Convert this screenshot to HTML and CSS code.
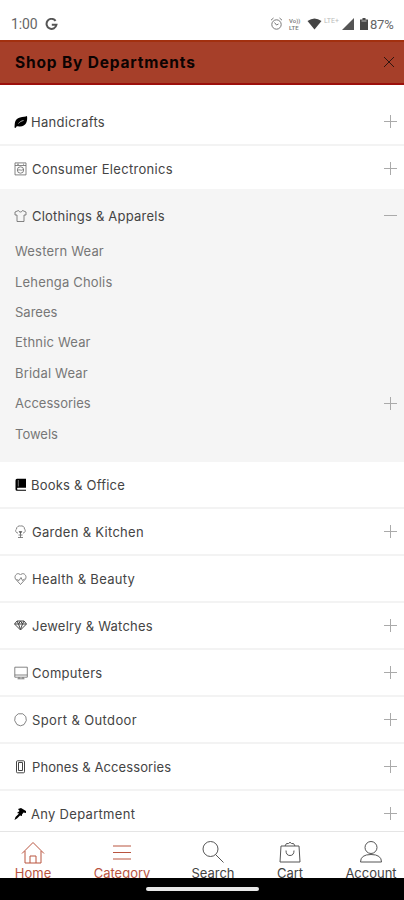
FILE: index.html
```
<!DOCTYPE html>
<html lang="en">
<head>
<meta charset="utf-8">
<title>Shop By Departments</title>
<link rel="stylesheet" href="styles.css">
</head>
<body>
<div class="phone">
  <div class="status">
    <span class="clock">1:00</span>
    <svg class="google" viewBox="0 0 13 13"><path d="M10.6 2.9A5 5 0 1 0 11.5 6.7H6.8" fill="none" stroke="#555" stroke-width="2"/></svg>
    <div class="status-right">
      <svg width="13" height="14" viewBox="0 0 13 14" fill="none" stroke="#777"><circle cx="6.5" cy="7.5" r="4.7"/><path d="M1 3.2 3.5 1M12 3.2 9.5 1M4.500 5.500l2 2.500 2-1"/></svg>
      <span class="volte"><b>Vo))</b><b>LTE</b></span>
      <svg class="wifi" width="15" height="12" viewBox="0 0 15 12"><path d="M.5 3Q7.5-2 14.500 3L7.500 11.500Z" fill="#444"/></svg>
      <span class="lte">LTE+</span>
      <svg class="signal" width="12" height="12" viewBox="0 0 12 12"><path d="M0 12 12 0V12Z" fill="#555"/></svg>
      <svg class="battery" width="8" height="12" viewBox="0 0 8 12"><path d="M2.500 0h3v1.500H8V12H0V1.500h2.500Z" fill="#484848"/><path d="M1.500 3h5" stroke="#bbb"/></svg>
      <span class="percent">87%</span>
    </div>
  </div>
  <header class="header">
    <h1>Shop By Departments</h1>
    <svg class="close" viewBox="0 0 12 12"><path d="M1 1 11 11M11 1 1 11" fill="none" stroke="#30150f"/></svg>
  </header>
  <main class="list">
    <section class="row"><svg class="icon" viewBox="0 0 14 14"><path d="M.5 12.500C1 9 0 4 6 2.500 9 1.800 11.500 2 13 1c.8 5-1 10.500-7 10.500-1.500 0-2.500-.2-3-.5L1.500 13Z"/><path d="M4.500 8.500C6 6.500 7.500 6 9.500 5.500" stroke="#bbb" stroke-width=".9" fill="none"/></svg><span class="wide">Handicrafts</span><i class="plus"></i></section>
    <section class="row second"><svg class="icon line" viewBox="0 0 14 14"><path d="M1 .9h11v12H1ZM1 3.500h11M3 2.200h2M9 2.200h1"/><circle cx="6.500" cy="8" r="3.200"/><path d="M3.500 8.500c2-2 3 1 6-1"/></svg><span class="i wide">Consumer Electronics</span><i class="plus"></i></section>
    <section class="open">
      <div class="row"><svg class="icon line" viewBox="0 0 14 14"><path d="M4.500 1.500 1 3v3h2v6.500h7V6h2V3L8.500 1.500C8 3.500 5 3.500 4.500 1.500Z"/></svg><span class="i">Clothings &amp; Apparels</span><i class="plus minus"></i></div>
      <ul>
        <li><span>Western Wear</span></li>
        <li><span>Lehenga Cholis</span></li>
        <li><span class="normal">Sarees</span></li>
        <li><span>Ethnic Wear</span></li>
        <li><span>Bridal Wear</span></li>
        <li><span class="normal">Accessories</span><i class="plus"></i></li>
        <li><span class="normal">Towels</span></li>
      </ul>
    </section>
    <section class="row"><svg class="icon" viewBox="0 0 14 14"><path d="M1.500 2.500Q1.500.8 3 .8h9v9H3.500q-1 1.200 0 2H12v1H3q-1.500 0-1.500-1.500Z"/><path d="M4.300 2v6.500" stroke="#aaa" stroke-width=".7"/></svg><span>Books &amp; Office</span></section>
    <section class="row"><svg class="icon line" viewBox="0 0 14 14"><path d="M4 8C1.500 8 1 5 2.500 4 2.500 1.500 5 .5 6.500 1c2-.5 4 .5 4 3C12 5.500 11 8 9 8M4 12.500h5M6.500 8v4.500M4.500 10h4"/><path d="M5.200 6.500h2.600L6.500 8.500Z" fill="#444"/></svg><span class="i wide">Garden &amp; Kitchen</span><i class="plus"></i></section>
    <section class="row"><svg class="icon line" viewBox="0 0 14 14"><path d="M6.500 12.500 1.500 7C-.5 3.500 4-.5 6.500 3 9-.5 13.500 3.500 11.500 7ZM2.500 7.500 5 8.500 7 5.500 8.500 8.500 10.500 7"/></svg><span class="i wide">Health &amp; Beauty</span></section>
    <section class="row"><svg class="icon line dark" viewBox="0 0 14 14"><path d="M3 2h7l2.500 3-6 6-6-6ZM.8 5h11.400M3 2l1.500 3 2 5.500 2-5.500L10 2M4.500 5l2-3 2 3"/></svg><span class="i">Jewelry &amp; Watches</span><i class="plus"></i></section>
    <section class="row"><svg class="icon line" viewBox="0 0 14 14"><path d="M.8 1.200h12.500v10H.8ZM.8 9h12.500M5 11v1.800M9 11v1.800M3.500 12.800h7"/></svg><span class="i wide">Computers</span><i class="plus"></i></section>
    <section class="row"><svg class="icon line" viewBox="0 0 14 14"><path d="m4.200.8 4.600 0 3 2.800.5 4-2.300 4-3.500 1.200L3 11.600.7 7.600l.5-4Z"/></svg><span class="i wider">Sport &amp; Outdoor</span><i class="plus"></i></section>
    <section class="row"><svg class="icon line dark" viewBox="0 0 14 14"><path d="M3.500.8h6q1 0 1 1v10q0 1-1 1h-6q-1 0-1-1v-10q0-1 1-1ZM4.500 2.500h4v8h-4Z"/></svg><span class="i slim">Phones &amp; Accessories</span><i class="plus"></i></section>
    <section class="row"><svg class="icon" viewBox="0 0 14 14"><path d="M4 2 7 1l5 3v2l-2.500-.5L8 7.500V9L6 8.500 3 11.500.5 13l1-3L5 6.500 3 6l2.500-2Z"/></svg><span class="wide">Any Department</span><i class="plus"></i></section>
  </main>
  <nav class="nav">
    <a class="home on"><svg viewBox="0 0 24 24"><path d="M1 12.500 12 1.500 23 12.500M4 10v12h16V10M9 22v-7h6v7"/></svg><span>Home</span></a>
    <a class="category on"><svg viewBox="0 0 24 24"><path d="M3 5h18M3 11.500h18M3 18h18"/></svg><span>Category</span></a>
    <a class="search"><svg viewBox="0 0 24 24"><circle cx="9.500" cy="8" r="7.500"/><path d="m14.500 13.500 8 8"/></svg><span>Search</span></a>
    <a class="cart"><svg viewBox="0 0 24 24"><path d="M3 5h18l1 16H2ZM7 5q1-3.500 3.500-2.500Q12 0 13.500 2.500 16 1.500 17 5M8 9.500q0 5 4 5t4-5"/></svg><span>Cart</span></a>
    <a class="account"><svg viewBox="0 0 24 24"><circle cx="12" cy="6.500" r="6"/><path d="M1.500 21q0-7.500 10.500-7.500T22.500 21Z"/></svg><span>Account</span></a>
  </nav>
  <footer class="gesture"><i></i></footer>
</div>
</body>
</html>
```
FILE: styles.css
```
* { box-sizing: border-box; }
body { margin: 0; background: #fff; font-family: Inter, "Liberation Sans", sans-serif; }
.phone { width: 404px; height: 900px; display: flex; flex-direction: column; overflow: hidden; background: #fff; }
svg { display: block; flex: none; }

.status { height: 40px; flex: none; display: flex; align-items: center; padding: 8px 9px 0 11px; color: #666; font-family: Roboto, sans-serif; font-size: 14px; }
.clock { width: 34px; letter-spacing: -.1px; }
.google { width: 13px; height: 13px; }
.status-right { display: flex; align-items: center; margin-left: auto; }
.volte { display: flex; flex-direction: column; width: 14px; margin-left: 6px; font-size: 6px; line-height: 7px; color: #777; }
.volte b { font-weight: 500; }
.wifi { margin-left: 4px; }
.lte { width: 18px; margin-left: 2px; font-size: 7px; line-height: 8px; padding-bottom: 7px; color: #bbb; }
.battery { margin-left: 6px; }
.percent { margin-left: 2px; width: 25px; font-size: 13px; letter-spacing: -.2px; }

.header { height: 45px; flex: none; display: flex; align-items: center; justify-content: space-between; padding: 0 9px 1px 15px; background: #a63f29; border-top: 2px solid #a2300f; border-bottom: 2px solid #9c0f0c; }
h1 { margin: 0; font-size: 15.5px; font-weight: 700; letter-spacing: .83px; color: #0c0302; white-space: nowrap; }
.close { width: 12px; height: 12px; }

.list { flex: 1; min-height: 0; padding-top: 14px; overflow: hidden; }
.row { height: 47px; display: flex; align-items: center; padding: 0 7px 0 14px; border-bottom: 2px solid #f3f3f3; color: #444; font-size: 13px; letter-spacing: .22px; white-space: nowrap; }
.row.second { height: 45px; padding-top: 2px; border-bottom-color: #f5f5f5; }
.wide { letter-spacing: .3px; }
.wider { letter-spacing: .38px; }
.slim { letter-spacing: .1px; }
.icon { width: 14px; height: 14px; margin-right: 3px; fill: #000; }
.icon.line { fill: none; stroke: #666; stroke-width: .8; }
.icon.dark { stroke: #444; stroke-width: 1; }
.i { margin-left: 1px; }
.plus { width: 13px; height: 13px; margin-left: auto; background: linear-gradient(#aaa, #aaa) center / 13px 1px no-repeat, linear-gradient(#aaa, #aaa) center / 1px 13px no-repeat; }
.minus { background: linear-gradient(#aaa, #aaa) center / 13px 1px no-repeat; }
.open { height: 271px; background: #f5f5f5; }
.open .row { height: 45px; padding-top: 4px; border: 0; }
.open ul { list-style: none; margin: 0; padding: 0; }
.open li { height: 30.4px; display: flex; align-items: center; padding: 0 7px 0 15px; color: #777; font-size: 13px; letter-spacing: .18px; }
.open .normal { letter-spacing: 0; }

.nav { height: 47px; flex: none; display: flex; justify-content: space-between; padding-top: 9px; border-top: 1px solid #e5e5e5; background: #fff; }
.nav a { display: flex; flex-direction: column; align-items: center; color: #444; font-size: 13px; line-height: 16px; white-space: nowrap; }
.nav svg { width: 24px; height: 24px; fill: none; stroke: #555; stroke-width: 1; }
.nav .on { color: #b9543f; }
.nav .on svg { stroke: #b9543f; }
.home { width: 66px; }
.category { width: 112px; }
.search { width: 70px; }
.cart { width: 84px; }
.account { width: 72px; padding-left: 6px; }
.gesture { position: relative; height: 22px; flex: none; display: flex; justify-content: center; padding-top: 9px; background: #000; }
.gesture i { width: 113px; height: 4px; border-radius: 2px; background: #e8e8e8; }
```
